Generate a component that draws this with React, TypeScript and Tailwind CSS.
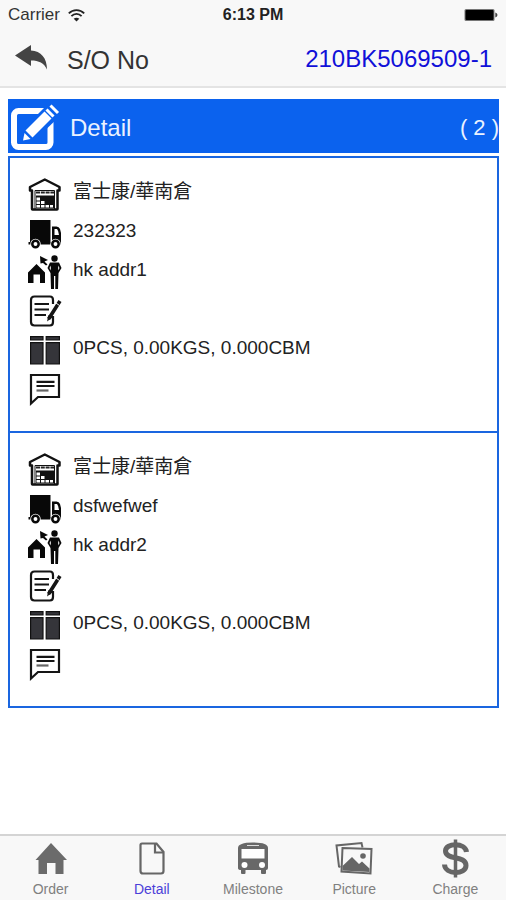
import { useState } from "react";
import type { ReactNode } from "react";

const ORDER_NO = "210BK5069509-1";

const details = [
  {
    id: 1,
    warehouse: "富士康/華南倉",
    truck: "232323",
    address: "hk addr1",
    note: "",
    cargo: "0PCS, 0.00KGS, 0.000CBM",
    remark: "",
  },
  {
    id: 2,
    warehouse: "富士康/華南倉",
    truck: "dsfwefwef",
    address: "hk addr2",
    note: "",
    cargo: "0PCS, 0.00KGS, 0.000CBM",
    remark: "",
  },
];

const BackIcon = () => (
  <svg width="34" height="28" viewBox="0 0 34 28" fill="#444">
    <path d="M0 11.5 L16 1 V6.5 C26 7 32 14 32 25.5 C29 19 24 16.5 16 16.5 V22 Z" />
  </svg>
);

const WifiIcon = () => (
  <svg width="17" height="13" viewBox="0 0 17 13" fill="none" stroke="#222" strokeWidth="1.8">
    <path d="M0.8 4.4 C5 0 12 0 16.2 4.4" />
    <path d="M3.4 7.2 C6.3 4.2 10.7 4.2 13.6 7.2" />
    <path d="M8.5 12.6 L5.7 9.8 C7.2 8.3 9.8 8.3 11.3 9.8 Z" fill="#222" stroke="none" />
  </svg>
);

const BatteryIcon = () => (
  <svg width="34" height="14" viewBox="0 0 34 14">
    <rect x="0.5" y="1" width="30" height="12" rx="1.5" fill="#777" />
    <rect x="1.5" y="2" width="28" height="10" rx="1" fill="#000" />
    <path d="M31.3 4.5 Q33.5 5.2 33.5 7 Q33.5 8.8 31.3 9.5 Z" fill="#444" />
  </svg>
);

const EditIcon = () => (
  <svg width="49" height="48" viewBox="0 0 49 48">
    <rect x="3" y="9" width="36.5" height="36" rx="4.5" fill="none" stroke="#fff" strokeWidth="6" />
    <path d="M11 39 L14 25 L37 2 L49 14 L25 37 Z" fill="#0b62ee" />
    <path d="M12 38.5 L13.5 31 L19.5 37 Z" fill="#fff" />
    <path d="M14.5 28.5 L33.5 9.500 L40.500 16.500 L21.500 35.500 Z" fill="#fff" />
    <path d="M35.5 7.5 L42.500 14.5 M39.5 3.5 L47 11" stroke="#fff" strokeWidth="3" />
  </svg>
);

const WarehouseIcon = () => (
  <svg width="34" height="34" viewBox="0 0 34 34">
    <path
      d="M4 13.5 V32 Q4 32.5 4.500 32.5 H29 Q29.5 32.5 29.5 32 V13.5 H31.5 V10 L16.800 2.5 L2 10 V13.5 Z"
      fill="#fff"
      stroke="#111"
      strokeWidth="2.5"
      strokeLinejoin="round"
    />
    <path d="M7 32 V13.500 H26.500 V32" fill="none" stroke="#111" strokeWidth="1" />
    <path d="M8 15.500 H26" stroke="#222" strokeWidth="2" strokeDasharray="4 0.800" />
    <path d="M8 18.500 H26 V31 H8 Z" fill="#111" />
    <path
      d="M8.500 20.500 H12 V23.500 H8.500 Z M8.500 24.500 H12 V27 H8.500 Z M13 24 H16.500 V27 H13 Z M8.500 28 H12 V30.500 H8.500 Z M13 28 H16.500 V30.500 H13 Z M17.500 28 H21 V30.500 H17.500 Z M22 28 H25 V30.500 H22 Z"
      fill="#fff"
    />
  </svg>
);

const TruckIcon = () => (
  <svg width="34" height="34" viewBox="0 0 34 34" fill="#080808">
    <path d="M2 4 H22.500 V27.500 H2 Z" />
    <path d="M24 10.500 H28.500 Q31 10.500 32 13 L33 17 V28 H22 V26.500 H24 Z" />
    <path d="M26.500 13 H29 Q30.500 14.500 31 19 H26.500 Z" fill="#fff" />
    <path d="M0.500 26 H33 V28.500 H0.500 Z" />
    <circle cx="7.500" cy="28" r="5.200" fill="#fff" />
    <circle cx="27.500" cy="28" r="5.200" fill="#fff" />
    <circle cx="7.500" cy="28" r="3.200" fill="#fff" stroke="#080808" strokeWidth="2.500" />
    <circle cx="27.500" cy="28" r="3.200" fill="#fff" stroke="#080808" strokeWidth="2.500" />
  </svg>
);

const AddressIcon = () => (
  <svg width="34" height="36" viewBox="0 0 34 36" fill="#080808">
    <path d="M0 18.500 L8.500 10 L17 18.500 V29 H12 V20.500 H5.500 V29 H0 Z" />
    <path d="M12 2 L20 6 L16.500 7.500 L19.500 10.500 L18 11.500 L15 9 L12.500 9.500 Z" />
    <circle cx="26.500" cy="4.500" r="3.200" />
    <path d="M22 8.500 H31 L33.500 14 L30.500 19 L30 35 H27.300 V22 H26 V35 H23 L22.500 19 L19.500 14 Z" />
    <path d="M22.800 11.500 L21.500 14 L22.800 16.500 Z M30.200 11.500 L31.500 14 L30.200 16.500 Z" fill="#fff" />
  </svg>
);

const NoteIcon = () => (
  <svg width="34" height="34" viewBox="0 0 34 34" fill="none" stroke="#151515">
    <path
      d="M25 10 V6 Q25 2.500 22 2.500 H6.500 Q3 2.500 3 6 V28 Q3 31.500 6.500 31.500 H22 Q25 31.500 25 28 V22"
      strokeWidth="2.200"
    />
    <path d="M6.500 10 H21 M6.500 15.500 H21 M6.500 21 H18" strokeWidth="2" />
    <path d="M32 7 L22.500 22 L20.500 25" strokeWidth="3.600" />
    <path d="M19 27.500 L20.500 21 L24.500 23.500 Z" fill="#151515" stroke="none" />
    <path d="M28 9 L31.500 11.500" stroke="#fff" strokeWidth="1" />
  </svg>
);

const CargoIcon = () => (
  <svg width="34" height="34" viewBox="0 0 34 34" fill="#35353a" stroke="#111" strokeWidth="1.200">
    <path d="M2.600 3.600 H15 V7 H2.600 Z M18.200 3.600 H31.400 V7 H18.200 Z" />
    <path d="M2.600 9.600 H15 V31 H2.600 Z M18.200 9.600 H31.400 V31 H18.200 Z" />
  </svg>
);

const RemarkIcon = () => (
  <svg width="34" height="34" viewBox="0 0 34 34" fill="none" stroke="#151515">
    <path d="M3 3 H31 V25 H10 L3 31.500 Z" strokeWidth="2.200" />
    <path d="M8.500 9.800 H26.500 M8.500 14 H26.500" strokeWidth="2.200" />
    <path d="M8.500 18.500 H20.500" stroke="#666" strokeWidth="2.200" />
  </svg>
);

const HomeIcon = () => (
  <svg width="38" height="38" viewBox="0 0 38 38" fill="#6b6b6b">
    <path d="M3.500 20 L19 3 L35 20 H31.500 V34 H23.500 V23 H15 V34 H6.500 V20 Z" />
  </svg>
);

const FileIcon = () => (
  <svg width="38" height="38" viewBox="0 0 38 38" fill="none" stroke="#666" strokeWidth="2.200">
    <path d="M9 3.500 H23.500 L30.500 12 V31 Q30.500 33.500 28 33.500 H10 Q7.500 33.500 7.500 31 V5 Q7.500 3.500 9 3.500 Z" />
    <path d="M22 4 V12.500 H30" />
  </svg>
);

const BusIcon = () => (
  <svg width="38" height="38" viewBox="0 0 38 38" fill="#686868">
    <path d="M4 8 Q4 2.500 19 2.500 Q34 2.500 34 8 V28 Q34 30 32 30 V33 Q32 34 31 34 H28 Q27 34 27 33 V30 H11.500 V33 Q11.500 34 10.500 34 H8 Q7 34 7 33 V30 Q4 30 4 28 Z" />
    <path d="M13 5.500 H25" stroke="#ddd" strokeWidth="1" />
    <path d="M7.500 9 H30.500 V18.500 H7.500 Z" fill="#fff" />
    <circle cx="10.500" cy="25" r="3" fill="#fff" />
    <circle cx="28" cy="25" r="3" fill="#fff" />
  </svg>
);

const PictureIcon = () => (
  <svg width="38" height="38" viewBox="0 0 38 38" fill="none" stroke="#666" strokeWidth="2">
    <path d="M5.500 27 L4 26.500 L1.500 5.500 L26.500 3 L27.500 7.500" />
    <path d="M7.500 8 L36.500 9 L35.500 33.500 L6.500 31.500 Z" />
    <circle cx="28" cy="16" r="2.800" fill="#666" stroke="none" />
    <path d="M7.500 30.500 V26 L17 17 L24 24 L27 21.500 L34.500 28.500 V32 Z" fill="#666" stroke="none" />
  </svg>
);

const DollarIcon = () => (
  <svg width="38" height="40" viewBox="0 0 38 40" fill="none" stroke="#666">
    <path d="M19.500 0.500 V38.500" strokeWidth="3.500" />
    <path
      d="M30.500 13 C29.500 3.500 9.500 3.500 9.500 12 C9.500 21.500 30 16 30 26.500 C30 36 9 36 8.500 25.500"
      strokeWidth="5"
    />
  </svg>
);

const tabs = [
  { name: "Order", icon: <HomeIcon /> },
  { name: "Detail", icon: <FileIcon /> },
  { name: "Milestone", icon: <BusIcon /> },
  { name: "Picture", icon: <PictureIcon /> },
  { name: "Charge", icon: <DollarIcon /> },
];

function Row({ icon, text }: { icon: ReactNode; text: string }) {
  return (
    <li className="flex h-[39px] items-center gap-[11px]">
      {icon}
      <span className="pb-0.5">{text}</span>
    </li>
  );
}

export default function App() {
  const [active, setActive] = useState("Detail");

  return (
    <div className="flex min-h-screen flex-col bg-white font-['Liberation_Sans','Noto_Sans_CJK_TC',sans-serif] text-[#222]">
      <header className="border-b-2 border-[#e4e4e4] bg-[#f8f8f8]">
        <div className="grid h-[30px] grid-cols-3 items-center px-2">
          <div className="flex items-center gap-2 text-[17px] text-[#333]">
            Carrier
            <WifiIcon />
          </div>
          <div className="text-center text-base font-bold">6:13 PM</div>
          <div className="flex justify-end">
            <BatteryIcon />
          </div>
        </div>
        <div className="flex h-14 items-center justify-between pr-3.5 pl-[15px]">
          <div className="flex items-center gap-[18px]">
            <button type="button" aria-label="Back">
              <BackIcon />
            </button>
            <h1 className="pt-1.5 text-[25px] text-[#333]">S/O No</h1>
          </div>
          <div className="pt-0.5 text-2xl text-[#1010d8]">{ORDER_NO}</div>
        </div>
      </header>

      <main className="flex-1 pt-[11px] pr-[7px] pb-4 pl-2">
        <div className="mb-[3px] flex h-[54px] items-center justify-between bg-[#0b62ee] pl-[3px] text-2xl text-[#eaf2ff]">
          <div className="flex items-center gap-2.5">
            <EditIcon />
            <h2 className="pt-1">Detail</h2>
          </div>
          <span className="pt-1 text-[22px]">( 2 )</span>
        </div>

        <div className="divide-y-2 divide-[#1a66e0] border-2 border-[#1a66e0]">
          {details.map((item) => (
            <ul
              key={item.id}
              className="px-[18px] pt-4 pb-[23px] text-[19px]"
            >
              <Row icon={<WarehouseIcon />} text={item.warehouse} />
              <Row icon={<TruckIcon />} text={item.truck} />
              <Row icon={<AddressIcon />} text={item.address} />
              <Row icon={<NoteIcon />} text={item.note} />
              <Row icon={<CargoIcon />} text={item.cargo} />
              <Row icon={<RemarkIcon />} text={item.remark} />
            </ul>
          ))}
        </div>
      </main>

      <nav className="grid h-[66px] grid-cols-5 border-t-2 border-[#d4d4d4] bg-[#f8f8f8]">
        {tabs.map((tab) => (
          <button
            key={tab.name}
            type="button"
            onClick={() => setActive(tab.name)}
            className="flex flex-col items-center text-sm"
          >
            <span className="flex h-[45px] items-center">{tab.icon}</span>
            <span
              className={
                active === tab.name
                  ? "leading-4 text-[#4b3fd8]"
                  : "leading-4 text-[#808080]"
              }
            >
              {tab.name}
            </span>
          </button>
        ))}
      </nav>
    </div>
  );
}
